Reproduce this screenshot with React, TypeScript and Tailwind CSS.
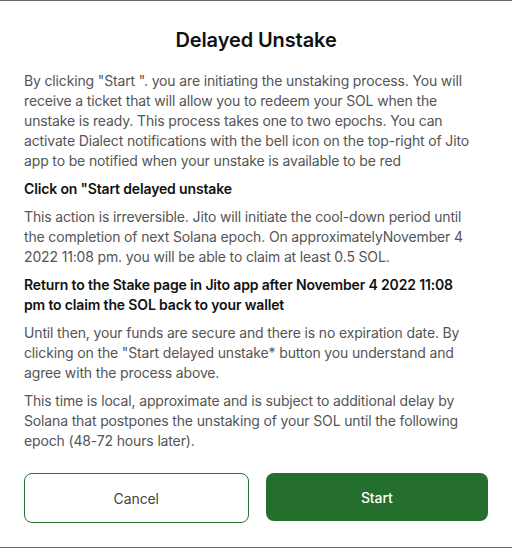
import React from 'react';

const UnstakeModal: React.FC = () => {
  return (
    <div className="w-[512px] h-[548px] bg-[#6b6b6b] flex flex-col py-px">
      <div className="flex-1 bg-white px-6 pt-[25px] font-['Inter',sans-serif]">
        <h2 className="text-center text-[20px] leading-7 font-semibold text-[#111] tracking-[-0.1px]">
          Delayed Unstake
        </h2>

        <div className="mt-[17px] flex flex-col gap-2 text-[14px] leading-5 tracking-[-0.15px]">
          <p className="text-[#555]">
            By clicking "Start ". you are initiating the unstaking process. You will receive a ticket
            that will allow you to redeem your SOL when the unstake is ready. This process takes one to
            two epochs. You can activate Dialect notifications with the bell icon on the top-right of
            Jito app to be notified when your unstake is available to be red
          </p>
          <p className="font-semibold text-[#111]">Click on "Start delayed unstake</p>
          <p className="text-[#555]">
            This action is irreversible. Jito will initiate the cool-down period until
            <br />
            the completion of next Solana epoch. On approximatelyNovember 4 2022 11:08 pm. you will be
            able to claim at least 0.5 SOL.
          </p>
          <p className="font-semibold text-[#111]">
            Return to the Stake page in Jito app after November 4 2022 11:08
            <br />
            pm to claim the SOL back to your wallet
          </p>
          <p className="text-[#555]">
            Until then, your funds are secure and there is no expiration date. By clicking on the "Start
            delayed unstake* button you understand and agree with the process above.
          </p>
          <p className="text-[#555]">
            This time is local, approximate and is subject to additional delay by Solana that postpones
            the unstaking of your SOL until the following epoch (48-72 hours later).
          </p>
        </div>

        {/* Actions */}
        <div className="mt-[22px] flex items-start gap-[17px]">
          <button className="flex-1 h-[50px] rounded-lg border border-[#2a7332] bg-white text-[14px] text-[#444] tracking-[-0.1px]">
            Cancel
          </button>
          <button className="flex-1 h-[48px] rounded-lg bg-[#246f2d] text-[14px] font-medium text-white tracking-[-0.1px]">
            Start
          </button>
        </div>
      </div>
    </div>
  );
};

export default function App() {
  return <UnstakeModal />;
}
